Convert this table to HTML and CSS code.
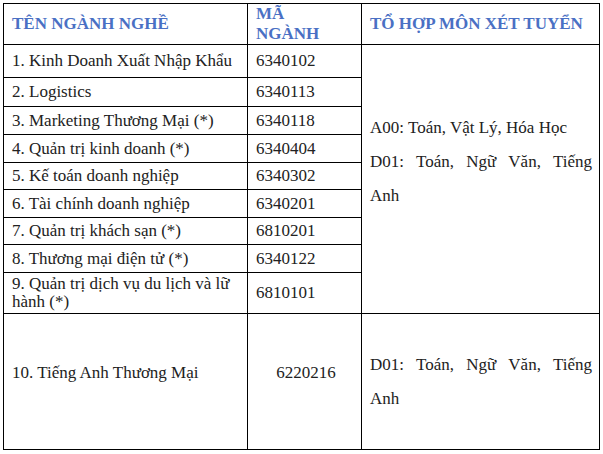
FILE: index.html
```html
<!DOCTYPE html>
<html lang="vi">
<head>
<meta charset="utf-8">
<title>Ngành nghề</title>
<link rel="stylesheet" href="styles.css">
</head>
<body>
<table class="majors">
  <colgroup>
    <col class="c-name">
    <col class="c-code">
    <col class="c-combo">
  </colgroup>
  <tr class="r-head">
    <th>TÊN NGÀNH NGHỀ</th>
    <th>MÃ<br>NGÀNH</th>
    <th>TỔ HỢP MÔN XÉT TUYỂN</th>
  </tr>
  <tr class="r-1">
    <td>1. Kinh Doanh Xuất Nhập Khẩu</td>
    <td>6340102</td>
    <td class="combo combo-first" rowspan="9">
      <p>A00: Toán, Vật Lý, Hóa Học</p>
      <p>D01: Toán, Ngữ Văn, Tiếng Anh</p>
    </td>
  </tr>
  <tr class="r-2">
    <td>2. Logistics</td>
    <td>6340113</td>
  </tr>
  <tr class="r-3">
    <td>3. Marketing Thương Mại (*)</td>
    <td>6340118</td>
  </tr>
  <tr class="r-4">
    <td>4. Quản trị kinh doanh (*)</td>
    <td>6340404</td>
  </tr>
  <tr class="r-5">
    <td>5. Kế toán doanh nghiệp</td>
    <td>6340302</td>
  </tr>
  <tr class="r-6">
    <td>6. Tài chính doanh nghiệp</td>
    <td>6340201</td>
  </tr>
  <tr class="r-7">
    <td>7. Quản trị khách sạn (*)</td>
    <td>6810201</td>
  </tr>
  <tr class="r-8">
    <td>8. Thương mại điện tử (*)</td>
    <td>6340122</td>
  </tr>
  <tr class="r-9">
    <td>9. Quản trị dịch vụ du lịch và lữ hành (*)</td>
    <td>6810101</td>
  </tr>
  <tr class="r-10">
    <td class="lift">10. Tiếng Anh Thương Mại</td>
    <td class="lift center">6220216</td>
    <td class="combo">
      <p>D01: Toán, Ngữ Văn, Tiếng Anh</p>
    </td>
  </tr>
</table>
</body>
</html>
```

FILE: styles.css
```css
html, body {
  margin: 0;
  padding: 0;
  background: #ffffff;
}

body {
  padding: 3px 0 0 3px;
  font-family: "Liberation Serif", Tinos, "Times New Roman", "DejaVu Serif", serif;
  font-size: 17px;
  color: #222222;
}

.majors {
  border-collapse: collapse;
  table-layout: fixed;
  width: 596px;
  font-family: "Liberation Serif", Tinos, "Times New Roman", "DejaVu Serif", serif;
}

.c-name { width: 244px; }
.c-code { width: 114px; }
.c-combo { width: 238px; }

.majors th,
.majors td {
  border: 1px solid #000000;
  padding: 0 5px 0 8px;
  vertical-align: middle;
  text-align: left;
  line-height: 18px;
  font-family: "Liberation Serif", Tinos, "Times New Roman", "DejaVu Serif", serif;
}

.majors th {
  font-weight: bold;
  color: #4a70c4;
  line-height: 20px;
}

.r-head { height: 41px; }
.r-1 { height: 33px; }
.r-2 { height: 29px; }
.r-3 { height: 28px; }
.r-4 { height: 28px; }
.r-5 { height: 27px; }
.r-6 { height: 28px; }
.r-7 { height: 27px; }
.r-8 { height: 28px; }
.r-9 { height: 41px; }
.r-10 { height: 136px; }

.majors td.combo {
  line-height: 34px;
  text-align: justify;
  padding-right: 7px;
}

.combo p {
  margin: 0;
}

.majors td.combo-first {
  padding-bottom: 34px;
}

.majors td.lift {
  padding-bottom: 18px;
}

.majors td.center {
  text-align: center;
}
```
